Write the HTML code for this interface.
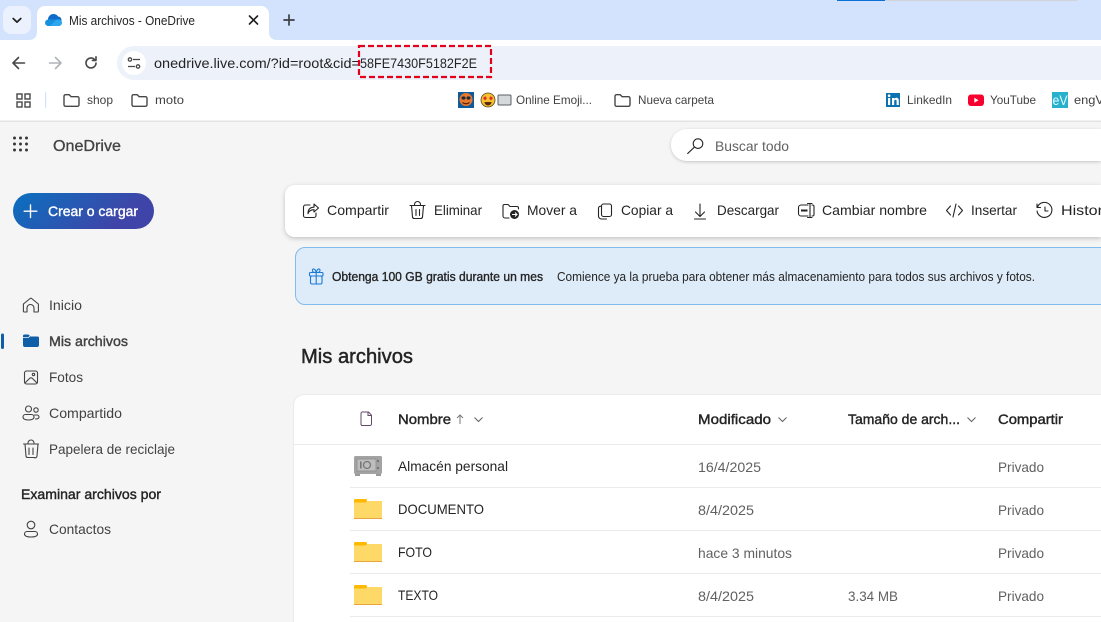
<!DOCTYPE html>
<html lang="es"><head><meta charset="utf-8"><title>Mis archivos - OneDrive</title>
<style>
html,body{margin:0;padding:0;width:1101px;height:622px;overflow:hidden;background:#f5f5f5}
svg{display:block}
text{font-family:"Liberation Sans","Noto Sans CJK JP",sans-serif;font-size:14px;fill:#424242}
.b{font-weight:400;stroke:#242424;stroke-width:.4}
.d{fill:#242424}
.g{fill:#616161}
.i{fill:none;stroke:#424242;stroke-width:1.1;stroke-linecap:round;stroke-linejoin:round}
.c{fill:none;stroke:#242424;stroke-width:1.1;stroke-linecap:round;stroke-linejoin:round}
.f{fill:none;stroke:#474747;stroke-width:1.4;stroke-linejoin:round}
.l{stroke:#ebebeb;stroke-width:1}
</style></head><body>
<svg width="1101" height="622" viewBox="0 0 1101 622" xmlns="http://www.w3.org/2000/svg">
<defs>
<linearGradient id="gb" x1="0" y1="0" x2="1" y2="0.3"><stop offset="0.1" stop-color="#0f6cbd"/><stop offset="0.9" stop-color="#3f45a8"/></linearGradient>
<filter id="sh" x="-5%" y="-30%" width="110%" height="170%"><feDropShadow dx="0" dy="1.5" stdDeviation="2.5" flood-color="#000" flood-opacity=".22"/></filter>
<filter id="sh2" x="-5%" y="-30%" width="110%" height="170%"><feDropShadow dx="0" dy="1" stdDeviation="1.5" flood-color="#000" flood-opacity=".2"/></filter>
<g id="bf"><path class="f" d="M1 3.2a1.5 1.5 0 0 1 1.5-1.5h3.7l2 2h6.3a1.5 1.5 0 0 1 1.5 1.5v6.6a1.5 1.5 0 0 1-1.5 1.5h-12a1.500 1.500 0 0 1-1.500-1.500z"/></g>
<g id="yf"><rect x="0" y="0" width="13" height="5" rx="1.500" fill="#ffb900"/><path d="M0 3.500h11.500l2-1.500H28v17H0z" fill="#ffd968"/><rect x="0" y="19" width="28" height="1" fill="#eaa63c"/></g>
</defs>

<!-- Chrome: tab strip -->
<rect width="1101" height="40" fill="#d3e3fd"/>
<rect x="837" y="0" width="48" height="1" fill="#0b72d4"/>
<rect x="885" y="0" width="192" height="1" fill="#d0d4da"/>
<rect x="3" y="6" width="28" height="28" rx="8" fill="#ebf1fd"/>
<path d="M13.200 18.500l3.800 3.600 3.800-3.600" fill="none" stroke="#1f1f1f" stroke-width="1.700" stroke-linecap="round" stroke-linejoin="round"/>
<path d="M29 40c5 0 8-3 8-8V14a8 8 0 0 1 8-8h216a8 8 0 0 1 8 8v18c0 5 3 8 8 8z" fill="#fff"/>
<circle cx="53.500" cy="19.500" r="5.500" fill="#0f6cc8"/>
<circle cx="58" cy="20" r="3.500" fill="#0f6cc8"/>
<rect x="45" y="19.500" width="17" height="6.500" rx="3.250" fill="#1490df"/>
<path d="M50 26l6.500-6.500h2a3.250 3.250 0 0 1 0 6.500z" fill="#2aa7ee"/>
<text x="69" y="25" textLength="126" lengthAdjust="spacingAndGlyphs" style="font-size:12.500px" class="d">Mis archivos - OneDrive</text>
<path d="M249.500 16l8 8M257.500 16l-8 8" stroke="#1f1f1f" stroke-width="1.600" stroke-linecap="round"/>
<path d="M289 15v10M284 20h10" stroke="#3c4043" stroke-width="1.700" stroke-linecap="round"/>

<!-- Chrome: toolbar -->
<rect y="40" width="1101" height="81" fill="#fff"/>
<path d="M24.500 63h-11M18.500 57.500L13 63l5.500 5.500" fill="none" stroke="#474747" stroke-width="1.600" stroke-linecap="round" stroke-linejoin="round"/>
<path d="M49.500 63h11M55.500 57.500L61 63l-5.500 5.500" fill="none" stroke="#b0b3b8" stroke-width="1.600" stroke-linecap="round" stroke-linejoin="round"/>
<path d="M96 63a5 5 0 1 1-1.600-3.700M96 56.800v3.600h-3.600" fill="none" stroke="#474747" stroke-width="1.600" stroke-linecap="round" stroke-linejoin="round"/>
<path d="M134 46h967v34H134a17 17 0 0 1 0-34z" fill="#edf2fa"/>
<circle cx="134" cy="63" r="12" fill="#fff"/>
<g fill="none" stroke="#474747" stroke-width="1.300"><circle cx="130" cy="59.500" r="1.700"/><circle cx="138" cy="66.500" r="1.700"/><path d="M133 59.500h7M128 66.500h7"/></g>
<text x="154" y="68" textLength="206" lengthAdjust="spacingAndGlyphs" class="d">onedrive.live.com/?id=root&amp;cid=</text>
<text x="360" y="68" textLength="117" lengthAdjust="spacingAndGlyphs" class="d">58FE7430F5182F2E</text>
<rect x="359" y="46" width="132" height="31" fill="none" stroke="#e4001b" stroke-width="2.200" stroke-dasharray="6 3"/>

<!-- Bookmarks -->
<g fill="none" stroke="#474747" stroke-width="1.400"><rect x="17" y="94" width="5" height="5"/><rect x="25" y="94" width="5" height="5"/><rect x="17" y="102" width="5" height="5"/><rect x="25" y="102" width="5" height="5"/></g>
<rect x="45" y="92" width="1.200" height="16" fill="#d3e3fd"/>
<use href="#bf" x="63" y="93"/><text x="87" y="104" textLength="26" lengthAdjust="spacingAndGlyphs" style="font-size:12px">shop</text>
<use href="#bf" x="131" y="93"/><text x="155" y="104" textLength="29" lengthAdjust="spacingAndGlyphs" style="font-size:12px">moto</text>
<rect x="458" y="92" width="16" height="16" fill="#0f5a9a"/>
<circle cx="466" cy="99.500" r="6.500" fill="#e8782a"/><ellipse cx="463.500" cy="98" rx="2" ry="1.600" fill="#1b2a3a"/><ellipse cx="468.500" cy="98" rx="2" ry="1.600" fill="#1b2a3a"/><path d="M462.500 102.500q3.500 2.500 7 0" fill="none" stroke="#5a1f08" stroke-width="1.200"/>
<circle cx="488" cy="100" r="7" fill="#f7c230" stroke="#5c4a20" stroke-width=".8"/><path d="M483.500 97.500l1.700-1.200 1.200 1 .2 1.600-1.600 1.500-1.700-1.600zM492.500 97.500l-1.700-1.200-1.200 1-.2 1.600 1.600 1.500 1.700-1.600z" fill="#e02b2b"/><path d="M484.500 102h7a3.500 3.500 0 0 1-7 0z" fill="#5a2b10"/>
<rect x="498" y="95" width="13" height="10" rx="1" fill="#d6d9dc" stroke="#5b5f63" stroke-width="1"/>
<text x="516" y="104" textLength="76" lengthAdjust="spacingAndGlyphs" style="font-size:12px">Online Emoji...</text>
<use href="#bf" x="614" y="93"/><text x="638" y="104" textLength="76" lengthAdjust="spacingAndGlyphs" style="font-size:12px">Nueva carpeta</text>
<rect x="886" y="93" width="14" height="14" fill="#0a72b1"/>
<rect x="888" y="98" width="2.200" height="7" fill="#fff"/><circle cx="889.100" cy="95.700" r="1.300" fill="#fff"/><path d="M892 98h2v1c.5-.8 1.300-1.200 2.300-1.200 1.800 0 2.500 1.100 2.500 3V105h-2.200v-3.800c0-.9-.3-1.500-1.100-1.500-.9 0-1.300.7-1.300 1.600V105H892z" fill="#fff"/>
<text x="907" y="104" textLength="45" lengthAdjust="spacingAndGlyphs" style="font-size:12px">LinkedIn</text>
<rect x="968" y="94.500" width="16" height="11.500" rx="3" fill="#f7002f"/><path d="M974.300 97.800l4.200 2.500-4.200 2.500z" fill="#fff"/>
<text x="990" y="104" textLength="46" lengthAdjust="spacingAndGlyphs" style="font-size:12px">YouTube</text>
<rect x="1052" y="92" width="16" height="16" fill="#27b1cd"/>
<text x="1052.500" y="105" textLength="15" lengthAdjust="spacingAndGlyphs" style="font-size:14px;fill:#e8fbff">eV</text>
<text x="1074" y="104" textLength="30" lengthAdjust="spacingAndGlyphs" style="font-size:12px">engV</text>
<rect y="120.500" width="1101" height="1.500" fill="#e3e3e3"/>

<!-- App header -->
<g fill="#3a3a3a"><circle cx="14.500" cy="138" r="1.500"/><circle cx="20.500" cy="138" r="1.500"/><circle cx="26.500" cy="138" r="1.500"/><circle cx="14.500" cy="144" r="1.500"/><circle cx="20.500" cy="144" r="1.500"/><circle cx="26.500" cy="144" r="1.500"/><circle cx="14.500" cy="150" r="1.500"/><circle cx="20.500" cy="150" r="1.500"/><circle cx="26.500" cy="150" r="1.500"/></g>
<text x="53" y="151" textLength="68" lengthAdjust="spacingAndGlyphs" style="font-size:15.500px;stroke:#424242;stroke-width:.3">OneDrive</text>
<path d="M687 129h414v32H687a16 16 0 0 1 0-32z" fill="#fff" filter="url(#sh2)"/>
<circle cx="698" cy="143.600" r="4.800" fill="none" stroke="#242424" stroke-width="1.100"/><path d="M694.500 147l-6.800 6.500" stroke="#242424" stroke-width="1.200" stroke-linecap="round"/>
<text x="715" y="151" textLength="74" lengthAdjust="spacingAndGlyphs" class="g">Buscar todo</text>

<!-- Create -->
<rect x="13" y="193" width="141" height="36" rx="18" fill="url(#gb)"/>
<path d="M30.500 205v12.500M24.200 211.200h12.600" stroke="#fff" stroke-width="1.400" stroke-linecap="round"/>
<text x="48" y="216" textLength="90" lengthAdjust="spacingAndGlyphs" style="font-size:14px;fill:#fff;stroke:#fff;stroke-width:.4">Crear o cargar</text>

<!-- Sidebar -->
<path class="i" d="M25 312h-.6a1 1 0 0 1-1-1v-7l6.700-5.500a1.200 1.200 0 0 1 1.500 0l6.800 5.500v7a1 1 0 0 1-1 1h-3.400v-4a3.500 3.500 0 0 0-7 0v4z"/>
<text x="49" y="310" textLength="33" lengthAdjust="spacingAndGlyphs">Inicio</text>
<rect x="1" y="333.500" width="3" height="15.500" rx="1.500" fill="#0f5ea8"/>
<path d="M23 336a1.500 1.500 0 0 1 1.500-1.500h4l2 2h7a1.500 1.500 0 0 1 1.500 1.500v7a2 2 0 0 1-2 2H25a2 2 0 0 1-2-2z" fill="#0f5ea8"/>
<path d="M23 337.500h5.500l1.500-1.600" stroke="#f5f5f5" stroke-width=".8" fill="none"/>
<text x="49" y="346" textLength="79" lengthAdjust="spacingAndGlyphs" style="stroke:#424242;stroke-width:.4">Mis archivos</text>
<rect x="24.500" y="371" width="13" height="13" rx="2" class="i"/><path class="i" d="M25 383l4.500-4.500a2 2 0 0 1 3 0L37 383"/><circle cx="33.500" cy="374.500" r="1.200" class="i"/>
<text x="49" y="382" textLength="34" lengthAdjust="spacingAndGlyphs">Fotos</text>
<circle cx="28.500" cy="409" r="3" class="i"/><circle cx="36" cy="410" r="2.200" class="i"/><path class="i" d="M23 417a2.500 2.500 0 0 1 2.500-2.500h6a2.500 2.500 0 0 1 2.500 2.500c0 2-2.500 3-5.500 3S23 419 23 417zM34.500 415h2.500a2 2 0 0 1 2 2c0 1-1 2-3.500 2"/>
<text x="49" y="418" textLength="73" lengthAdjust="spacingAndGlyphs">Compartido</text>
<path class="i" d="M23.500 444h15M28 444v-1a3 3 0 0 1 6 0v1M25 444l1 12a1.800 1.800 0 0 0 1.800 1.500h6.400A1.800 1.800 0 0 0 37 456l1-12M29 448v6.500M33 448v6.500"/>
<text x="49" y="454" textLength="126" lengthAdjust="spacingAndGlyphs">Papelera de reciclaje</text>
<text x="21" y="499" textLength="140" lengthAdjust="spacingAndGlyphs" class="b d">Examinar archivos por</text>
<circle cx="31" cy="525" r="3.800" class="i"/><path class="i" d="M24.500 534a2.500 2.500 0 0 1 2.500-2.500h8a2.500 2.500 0 0 1 2.500 2.500c0 2.200-3 3-6.500 3s-6.500-.8-6.500-3z"/>
<text x="49" y="534" textLength="62" lengthAdjust="spacingAndGlyphs">Contactos</text>

<!-- Command bar -->
<path d="M295 185h806v52H295a10 10 0 0 1-10-10v-32a10 10 0 0 1 10-10z" fill="#fff" filter="url(#sh)"/>
<path class="c" d="M310 205h-4.500a2 2 0 0 0-2 2v8.500a2 2 0 0 0 2 2h8.500a2 2 0 0 0 2-2V213"/><path class="c" d="M314 204l4.500 4-4.500 4v-2.300c-3 0-5 1-6 4 0-4 2-6.500 6-6.500z"/>
<text x="327" y="215" textLength="62" lengthAdjust="spacingAndGlyphs" class="d">Compartir</text>
<path class="c" d="M410 205.500h15M414.500 205.500v-1a3 3 0 0 1 6 0v1M411.500 205.500l1 11.500a1.800 1.800 0 0 0 1.800 1.500h6.400a1.800 1.800 0 0 0 1.800-1.500l1-11.500M416 209.500v6M419.500 209.500v6"/>
<text x="434" y="215" textLength="48" lengthAdjust="spacingAndGlyphs" class="d">Eliminar</text>
<path class="c" d="M509 218h-4a2 2 0 0 1-2-2v-10a1.500 1.500 0 0 1 1.500-1.500h3.500l2 2h7a1.500 1.500 0 0 1 1.500 1.500v1"/><circle cx="514.500" cy="214.500" r="4.500" fill="#242424"/><path d="M512 214.500h4.500M515 212.500l2 2-2 2" stroke="#fff" stroke-width="1" fill="none"/>
<text x="527" y="215" textLength="50" lengthAdjust="spacingAndGlyphs" class="d">Mover a</text>
<rect x="601.500" y="204" width="10" height="12.500" rx="2" class="c"/><path class="c" d="M601.500 206.500a2 2 0 0 0-3 1.500v8a3 3 0 0 0 3 3h5"/>
<text x="621" y="215" textLength="52" lengthAdjust="spacingAndGlyphs" class="d">Copiar a</text>
<path class="c" d="M700 204v12M695.500 212l4.500 4.500 4.500-4.500M694.500 219h11"/>
<text x="717" y="215" textLength="62" lengthAdjust="spacingAndGlyphs" class="d">Descargar</text>
<path class="c" d="M808 205h-7a2.500 2.500 0 0 0-2.500 2.500v6a2.500 2.500 0 0 0 2.500 2.500h7M812 205h.5a1.500 1.500 0 0 1 1.500 1.500v8a1.500 1.500 0 0 1-1.500 1.500H812M807.500 203.500h4.500M810 203.500v14M807.500 217.500h4.500"/><rect x="801" y="209.500" width="6.500" height="2" fill="#242424"/>
<text x="822" y="215" textLength="105" lengthAdjust="spacingAndGlyphs" class="d">Cambiar nombre</text>
<path class="c" d="M950.500 206l-4 4.500 4 4.500M958.500 206l4 4.500-4 4.500M956 204l-3 13"/>
<text x="971" y="215" textLength="46" lengthAdjust="spacingAndGlyphs" class="d">Insertar</text>
<path class="c" d="M1037.500 207a7.500 7.500 0 1 1-.5 4M1037 204v3.500h3.500M1045 207v4h3"/>
<text x="1061" y="215" textLength="58" lengthAdjust="spacingAndGlyphs" class="d">Historial</text>

<!-- Banner -->
<path d="M1102 247.500H305a9.500 9.500 0 0 0-9.500 9.500v38a9.500 9.500 0 0 0 9.500 9.500h797" fill="#deebf8" stroke="#82bcee" stroke-width="1"/>
<g fill="none" stroke="#1a7ad6" stroke-width="1.100" stroke-linejoin="round"><rect x="309.500" y="272.500" width="13.500" height="3.500" rx="1"/><rect x="310.500" y="276" width="11.500" height="8" rx="1.500"/><path d="M316.200 272.500v11.500M316.200 272.500c-3.500 0-4-1.200-3.800-2.500.4-1.700 3-1.500 3.800 2.500zM316.200 272.500c3.500 0 4-1.200 3.800-2.500-.4-1.700-3-1.500-3.800 2.500z"/></g>
<text x="332" y="281" textLength="211" lengthAdjust="spacingAndGlyphs" class="b d" style="font-size:12.500px;stroke-width:.35">Obtenga 100 GB gratis durante un mes</text>
<text x="557" y="281" textLength="478" lengthAdjust="spacingAndGlyphs" class="d" style="font-size:12.500px">Comience ya la prueba para obtener más almacenamiento para todos sus archivos y fotos.</text>

<text x="301" y="363" textLength="112" lengthAdjust="spacingAndGlyphs" class="d" style="font-size:20px;stroke:#242424;stroke-width:.45">Mis archivos</text>

<!-- Card -->
<path d="M1102 395H304a10 10 0 0 0-10 10v218h808z" fill="#fff"/>
<path d="M1102 394.500H304a10.500 10.500 0 0 0-10.500 10.500v218" fill="none" stroke="#ebebeb"/>
<path d="M363 412h5.500l3 3.200V424a1.500 1.500 0 0 1-1.500 1.500h-8a1.500 1.500 0 0 1-1-1.500V413.500a1.500 1.500 0 0 1 2-1.500zM368 412v3.500h3.500" fill="none" stroke="#5f4b66" stroke-width="1"/>
<text x="398" y="424" textLength="53" lengthAdjust="spacingAndGlyphs" class="b d">Nombre</text>
<path d="M460 424v-9M457 418l3-3 3 3" fill="none" stroke="#7a7a7a" stroke-width="1"/>
<path d="M474.500 417.500l4 4 4-4" fill="none" stroke="#616161" stroke-width="1"/>
<text x="698" y="424" textLength="73" lengthAdjust="spacingAndGlyphs" class="b d">Modificado</text>
<path d="M778.500 417.500l4 4 4-4" fill="none" stroke="#616161" stroke-width="1"/>
<text x="848" y="424" textLength="112" lengthAdjust="spacingAndGlyphs" class="b d">Tamaño de arch...</text>
<path d="M967.500 417.500l4 4 4-4" fill="none" stroke="#616161" stroke-width="1"/>
<text x="998" y="424" textLength="65" lengthAdjust="spacingAndGlyphs" class="b d">Compartir</text>
<line class="l" x1="294" y1="444.500" x2="1101" y2="444.500"/>

<!-- Rows -->
<rect x="354" y="456" width="28" height="18" rx="1.500" fill="#a3a3a3"/>
<rect x="355" y="474" width="5" height="2" fill="#9a9a9a"/><rect x="376" y="474" width="5" height="2" fill="#9a9a9a"/>
<rect x="357" y="459" width="19" height="12" fill="#bdbdbd" stroke="#8c8c8c" stroke-width=".8"/>
<circle cx="367" cy="465" r="3.500" fill="none" stroke="#777" stroke-width="1.300"/><rect x="360" y="461.500" width="1.600" height="7" fill="#777"/>
<path d="M378 460v2M378 467v2" stroke="#666" stroke-width="1.500"/>
<text x="398" y="471" textLength="110" lengthAdjust="spacingAndGlyphs" class="d">Almacén personal</text>
<text x="698" y="472" textLength="63" lengthAdjust="spacingAndGlyphs" class="g">16/4/2025</text>
<text x="998" y="472" textLength="46" lengthAdjust="spacingAndGlyphs" class="g">Privado</text>
<line class="l" x1="350" y1="487.500" x2="1101" y2="487.500"/>

<use href="#yf" x="354" y="499"/>
<text x="398" y="514" textLength="86" lengthAdjust="spacingAndGlyphs" class="d">DOCUMENTO</text>
<text x="698" y="515" textLength="56" lengthAdjust="spacingAndGlyphs" class="g">8/4/2025</text>
<text x="998" y="515" textLength="46" lengthAdjust="spacingAndGlyphs" class="g">Privado</text>
<line class="l" x1="350" y1="530.500" x2="1101" y2="530.500"/>

<use href="#yf" x="354" y="542"/>
<text x="398" y="557" textLength="34" lengthAdjust="spacingAndGlyphs" class="d">FOTO</text>
<text x="698" y="558" textLength="94" lengthAdjust="spacingAndGlyphs" class="g">hace 3 minutos</text>
<text x="998" y="558" textLength="46" lengthAdjust="spacingAndGlyphs" class="g">Privado</text>
<line class="l" x1="350" y1="573.500" x2="1101" y2="573.500"/>

<use href="#yf" x="354" y="585"/>
<text x="398" y="600" textLength="40" lengthAdjust="spacingAndGlyphs" class="d">TEXTO</text>
<text x="698" y="601" textLength="56" lengthAdjust="spacingAndGlyphs" class="g">8/4/2025</text>
<text x="848" y="601" textLength="50" lengthAdjust="spacingAndGlyphs" class="g">3.34 MB</text>
<text x="998" y="601" textLength="46" lengthAdjust="spacingAndGlyphs" class="g">Privado</text>
<line class="l" x1="350" y1="616.500" x2="1101" y2="616.500"/>
</svg>
</body></html>
